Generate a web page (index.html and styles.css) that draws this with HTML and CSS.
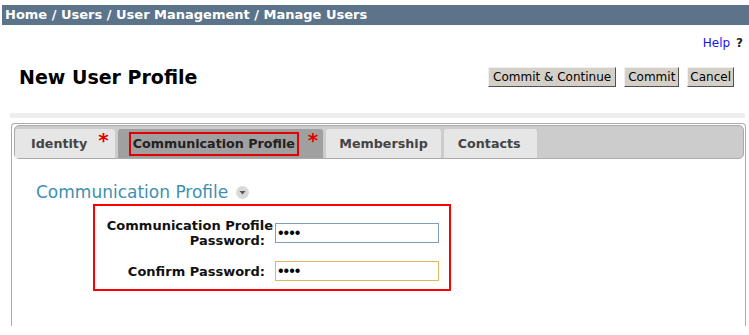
FILE: index.html
```html
<!DOCTYPE html>
<html lang="en">
<head>
    <meta charset="UTF-8">
    <title>New User Profile</title>
    <link rel="stylesheet" href="styles.css">
</head>
<body>
    <div class="crumbs">Home / Users / User Management / Manage Users</div>

    <div class="help-row">
        <a href="#" class="help">Help</a> <b>?</b>
    </div>

    <div class="title-row">
        <h1>New User Profile</h1>
        <div class="actions">
            <button>Commit &amp; Continue</button>
            <button>Commit</button>
            <button>Cancel</button>
        </div>
    </div>

    <div class="separator"></div>

    <div class="panel">
        <div class="tabbar">
            <div class="tab tab-identity">Identity<span class="req">*</span></div>
            <div class="tab tab-active"><span class="mark">Communication Profile</span><span class="req">*</span></div>
            <div class="tab tab-membership">Membership</div>
            <div class="tab tab-contacts">Contacts</div>
        </div>

        <div class="content">
            <h2>Communication Profile
                <span class="toggle">
                    <svg width="13" height="13" viewBox="0 0 13 13">
                        <circle cx="6.5" cy="6.5" r="6.5" fill="#d9d9d9"/>
                        <polygon points="3.5,5 9.5,5 6.5,8.5" fill="#555"/>
                    </svg>
                </span>
            </h2>

            <div class="form-box">
                <label>Communication Profile<br><span class="pad">Password:</span></label>
                <input type="password" value="abcd">
                <label><span class="pad">Confirm Password:</span></label>
                <input type="password" value="abcd" class="focused">
            </div>
        </div>
    </div>
</body>
</html>
```

FILE: styles.css
```css
body {
    margin: 0;
    font-family: "DejaVu Sans", Verdana, sans-serif;
    background: #fff;
    color: #000;
}
.crumbs {
    margin: 5px 0 0 2px;
    height: 20px;
    line-height: 20px;
    padding-left: 3px;
    background-color: #5c7489;
    color: #fff;
    font-weight: bold;
    font-size: 13px;
}
.help-row {
    text-align: right;
    padding-right: 6px;
    margin-top: 10px;
    font-size: 12px;
    height: 16px;
    line-height: 16px;
}
.help {
    color: #1515ee;
    text-decoration: none;
}
.help-row b {
    color: #222;
    margin-left: 2px;
}
.title-row {
    display: flex;
    justify-content: space-between;
    align-items: center;
    margin-top: 15px;
    padding: 0 15px 0 19px;
    height: 22px;
}
h1 {
    margin: 0;
    font-size: 19px;
    font-weight: bold;
    color: #000;
}
.actions {
    display: flex;
    gap: 8px;
}
.actions button {
    height: 20px;
    padding: 0 3px;
    font-family: "DejaVu Sans", Verdana, sans-serif;
    font-size: 12px;
    color: #000;
    background-color: #d4d0c8;
    border: 1px solid;
    border-color: #f0f0f0 #505050 #505050 #f0f0f0;
    border-radius: 0;
}
.actions button:first-child {
    padding: 0 4px;
}
.actions button:last-child {
    padding: 0 2px;
}
.separator {
    margin: 25px 4px 0 10px;
    height: 5px;
    background-color: #eeeeee;
}
.panel {
    margin: 5px 3px 0 11px;
    height: 201px;
    border: 1px solid #aaaaaa;
    border-bottom: none;
    border-radius: 4px 4px 0 0;
    padding: 1px 1px 0 2px;
}
.tabbar {
    display: flex;
    align-items: flex-end;
    gap: 3px;
    height: 29px;
    padding: 3px 0 0 0;
    background-color: #cccccc;
    border: 1px solid #aaaaaa;
    border-radius: 5px;
}
.tab {
    height: 29px;
    line-height: 30px;
    background-color: #e6e6e6;
    border-radius: 3px 3px 0 0;
    color: #444;
    font-size: 12.7px;
    font-weight: bold;
}
.tab-identity {
    padding: 0 6px 0 16px;
}
.tab-membership {
    padding: 0 13px 0 13px;
}
.tab-contacts {
    padding: 0 16px 0 14px;
}
.tab-active {
    background-color: #a0a0a0;
    color: #222;
    padding: 0 5px 0 11px;
}
.mark {
    display: inline-block;
    line-height: 20px;
    padding: 0 2px;
    border: 2px solid #e00000;
}
.req {
    color: #e00000;
    font-size: 20px;
    margin-left: 11px;
    vertical-align: top;
    line-height: 22px;
}
.tab-active .req {
    margin-left: 9px;
}
.content {
    padding: 0 0 0 22px;
}
h2 {
    margin: 23px 0 0 0;
    height: 20px;
    font-size: 17px;
    font-weight: normal;
    color: #3d90b3;
    display: flex;
    align-items: center;
    gap: 8px;
}
.toggle {
    display: inline-flex;
}
.form-box {
    margin: 2px 0 0 57px;
    width: 342px;
    border: 2px solid #ff0000;
    display: grid;
    grid-template-columns: 176px 164px;
    column-gap: 2px;
    row-gap: 13px;
    padding: 12px 10px 8px 2px;
    align-items: center;
}
.form-box label {
    text-align: right;
    font-size: 13px;
    font-weight: bold;
    color: #111;
    line-height: 15px;
}
.pad {
    display: inline-block;
    padding-right: 8px;
}
.form-box input {
    height: 20px;
    box-sizing: border-box;
    border: 1px solid #7f9db9;
    padding: 0 2px;
    font-size: 16px;
    width: 164px;
}
.form-box input.focused {
    border-color: #e2b75e;
}
```
